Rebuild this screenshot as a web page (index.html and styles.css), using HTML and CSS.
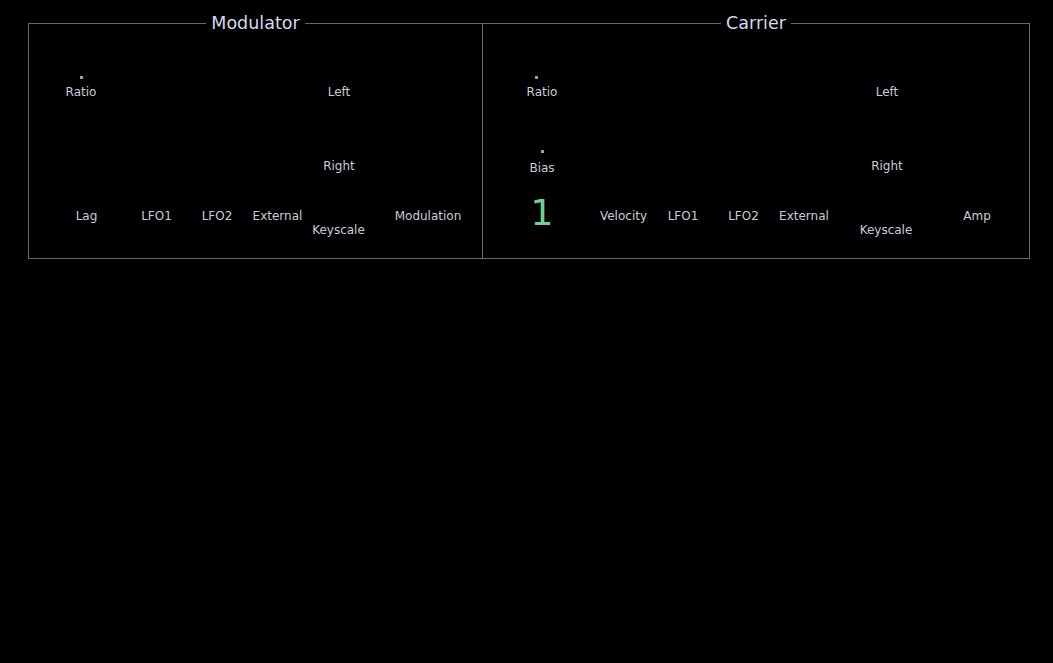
FILE: index.html
```html
<!DOCTYPE html>
<html>
<head>
<meta charset="utf-8">
<link rel="stylesheet" href="styles.css">
</head>
<body>
<div class="panel">
  <fieldset class="group group-mod">
    <legend>Modulator</legend>
    <div class="top">
      <div class="col col-mod-ratio">
        <div class="knob">
          <span class="dot"></span>
          <span class="label">Ratio</span>
        </div>
      </div>
      <div class="col col-stereo col-mod-stereo">
        <span class="label">Left</span>
        <span class="label right">Right</span>
      </div>
    </div>
    <div class="bottom bottom-mod">
      <span class="cell label w79">Lag</span>
      <span class="cell label w61">LFO1</span>
      <span class="cell label w60">LFO2</span>
      <span class="cell label w61">External</span>
      <span class="cell label w61 low">Keyscale</span>
      <span class="cell label w90 mod-out">Modulation</span>
    </div>
  </fieldset>
  <fieldset class="group group-car">
    <legend>Carrier</legend>
    <div class="top">
      <div class="col col-car-ratio">
        <div class="knob">
          <span class="dot dot-shift"></span>
          <span class="label">Ratio</span>
        </div>
        <div class="knob knob-bias">
          <span class="dot dot-bias"></span>
          <span class="label">Bias</span>
        </div>
      </div>
      <div class="col col-stereo col-car-stereo">
        <span class="label">Left</span>
        <span class="label right">Right</span>
      </div>
    </div>
    <div class="bottom bottom-car">
      <span class="cell w60 big">1</span>
      <span class="cell label w59 vel">Velocity</span>
      <span class="cell label w60">LFO1</span>
      <span class="cell label w61">LFO2</span>
      <span class="cell label w60">External</span>
      <span class="cell label w104 low">Keyscale</span>
      <span class="cell label w78">Amp</span>
    </div>
  </fieldset>
</div>
</body>
</html>
```

FILE: styles.css
```css
html, body {
  margin: 0;
  padding: 0;
  background: #000;
}

body {
  font-family: "DejaVu Sans", "Liberation Sans", sans-serif;
  color: #c9ccd8;
  width: 1053px;
  height: 663px;
  overflow: hidden;
}

.panel {
  display: flex;
  align-items: stretch;
  padding: 13px 0 0 28px;
}

.group {
  box-sizing: border-box;
  margin: 0;
  padding: 0 0 21px 0;
  min-width: 0;
  border: 1px solid #686868;
}

.group-mod {
  width: 455px;
}

.group-car {
  width: 548px;
  margin-left: -1px;
}

legend {
  margin: 0 auto;
  padding: 0 5px;
  font-size: 17.5px;
  line-height: 21px;
  color: #d6d9ec;
}

.top {
  display: flex;
  height: 98px;
  margin-top: 42px;
}

.col {
  display: flex;
  flex-direction: column;
  align-items: center;
  width: 60px;
  flex-shrink: 0;
}

.col-mod-ratio {
  margin-left: 22px;
}

.col-mod-stereo {
  margin-left: 198px;
}

.col-car-ratio {
  margin-left: 29px;
}

.col-car-stereo {
  margin-left: 285px;
}

.col-stereo {
  padding-top: 9px;
}

.knob {
  display: flex;
  flex-direction: column;
  align-items: center;
}

.dot {
  display: block;
  width: 3px;
  height: 3px;
  background: #a0a0a8;
  margin-bottom: 6px;
}

.dot-shift {
  transform: translateX(-6px);
}

.knob-bias {
  margin-top: 51px;
}

.dot-bias {
  margin-bottom: 8px;
  transform: translateX(1px);
}

.label {
  display: block;
  font-size: 12px;
  line-height: 14px;
  white-space: nowrap;
  text-align: center;
}

.right {
  margin-top: 60px;
}

.bottom {
  display: flex;
  height: 42px;
  margin-top: 21px;
}

.bottom-mod {
  padding-left: 18px;
}

.bottom-car {
  padding-left: 29px;
}

.cell {
  flex-shrink: 0;
  box-sizing: border-box;
  padding-top: 14px;
  text-align: center;
}

.cell.low {
  padding-top: 28px;
}

.w59 { width: 59px; }
.w60 { width: 60px; }
.w61 { width: 61px; }
.w78 { width: 78px; }
.w79 { width: 79px; }
.w90 { width: 90px; }
.w104 { width: 104px; }

.mod-out {
  margin-left: 14px;
}

.vel {
  margin-left: 22px;
}

.big {
  padding-top: 0;
  font-size: 36px;
  line-height: 36px;
  color: #72d190;
}
```
